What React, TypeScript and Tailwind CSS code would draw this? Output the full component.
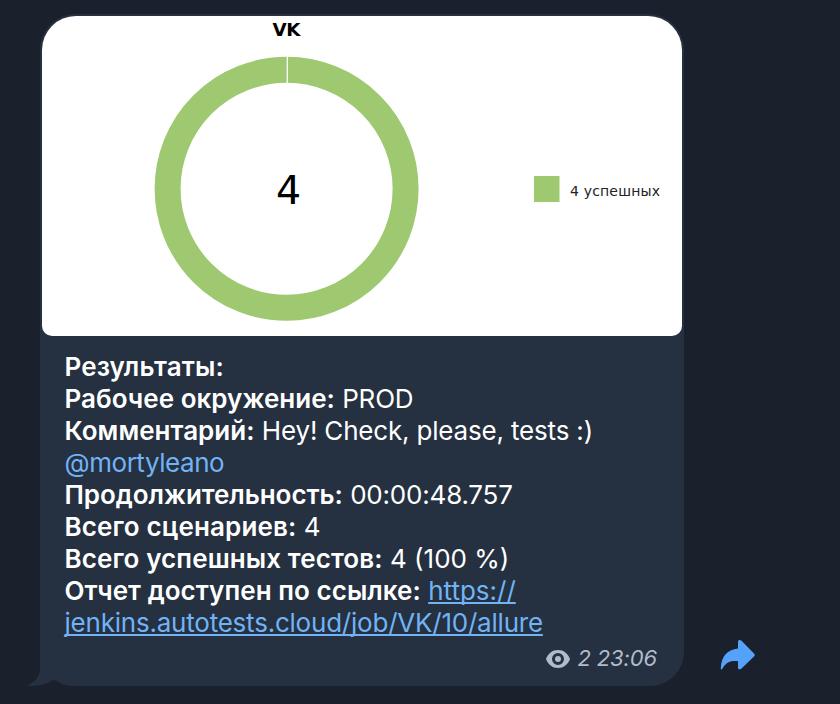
type Row = { label: string; value?: string; labelCls: string; valueCls?: string };

const rows: Row[] = [
  { label: "Результаты:", labelCls: "tracking-[0.1px]" },
  { label: "Рабочее окружение:", value: "PROD", labelCls: "tracking-[0.02px]", valueCls: "tracking-[-0.2px]" },
  { label: "Комментарий:", value: "Hey! Check, please, tests :)", labelCls: "tracking-[0.02px]", valueCls: "tracking-[-0.18px]" },
];

const stats: Row[] = [
  { label: "Продолжительность:", value: "00:00:48.757", labelCls: "tracking-[-0.05px]", valueCls: "tracking-[-0.2px]" },
  { label: "Всего сценариев:", value: "4", labelCls: "tracking-[0.14px]" },
  { label: "Всего успешных тестов:", value: "4 (100 %)", labelCls: "tracking-[0.1px]" },
];

const linkCls =
  "text-[#71b3f5] underline decoration-2 underline-offset-2 [text-decoration-skip-ink:none]";

function Line({ row }: { row: Row }) {
  return (
    <p className="h-8 whitespace-nowrap">
      <b className={`font-semibold ${row.labelCls}`}>{row.label}</b>{" "}
      <span className={row.valueCls}>{row.value}</span>
    </p>
  );
}

function Chart() {
  return (
    <svg
      className="block h-80 w-[640px] rounded-t-[34px] rounded-b-[10px] bg-white"
      viewBox="42 16 640 320"
      fontFamily="'DejaVu Sans', sans-serif"
    >
      <text x="286.5" y="35.5" fontSize="18.3" fontWeight="700" textAnchor="middle" textLength="28">
        VK
      </text>
      <circle cx="286.6" cy="188.8" r="119" fill="none" stroke="#9fc971" strokeWidth="26" />
      <path d="M287.300 56v27" stroke="#fff" strokeWidth="1.3" />
      <text x="288.5" y="203.500" fontSize="39.5" textAnchor="middle">
        4
      </text>
      <rect x="534" y="176" width="25.5" height="26" fill="#9fc971" />
      <text x="570" y="195.500" fontSize="14" fill="#222" textLength="90">
        4 успешных
      </text>
    </svg>
  );
}

export default function App() {
  return (
    <main className="flex h-[704px] w-[840px] items-end overflow-hidden bg-[#1b212c] pb-[18px] pl-10 font-['Inter',sans-serif]">
      <article className="relative h-[672px] w-[644px] rounded-t-[36px] rounded-br-[34px] rounded-bl-[34px] bg-[#253040] p-0.5">
        <svg className="absolute bottom-0 -left-3 h-12 w-[60px]" viewBox="0 0 60 48" fill="#253040">
          <path d="M12 0v30c0 8-4 13-12 17.3v.7c12 0 20-2 26-7 6 5 13 7 20 7h14V0Z" />
        </svg>
        <div className="relative">
          <Chart />
          <div className="pt-[15px] pr-[21px] pl-[22.5px] text-[26px] leading-8 text-white">
            {rows.map((r) => (
              <Line key={r.label} row={r} />
            ))}
            <p className="h-8 tracking-[-0.45px] text-[#71b3f5]">@mortyleano</p>
            {stats.map((r) => (
              <Line key={r.label} row={r} />
            ))}
            <p className="h-8 whitespace-nowrap">
              <b className="font-semibold tracking-[0.05px]">Отчет доступен по ссылке:</b>{" "}
              <a className={linkCls}>https://</a>
            </p>
            <p className="h-8 whitespace-nowrap">
              <a className={`tracking-[-0.22px] ${linkCls}`}>jenkins.autotests.cloud/job/VK/10/allure</a>
            </p>
          </div>
          <footer className="flex h-9 items-center justify-end gap-[7px] pt-[3px] pr-[25px] text-[22px] tracking-[-0.12px] text-[#b0bccd]">
            <svg className="h-[18px] w-6" viewBox="0 0 24 18">
              <path
                fillRule="evenodd"
                fill="currentColor"
                d="M12 0C6.5 0 2 3.4 0 9c2 5.600 6.500 9 12 9s10-3.400 12-9c-2-5.600-6.500-9-12-9Zm0 3a6 6 0 1 1 0 12 6 6 0 0 1 0-12Zm0 3a3 3 0 1 0 0 6 3 3 0 0 0 0-6Z"
              />
            </svg>
            <i>2 23:06</i>
          </footer>
        </div>
      </article>
      <svg className="mb-[14px] ml-9 h-8 w-9" viewBox="720 640 36 32">
        <path
          fill="#54a2fa"
          d="M738 642c0-2 2-2.500 3.500-1.200L754 653.500q1.500 1.500 0 3L741.500 668.500c-1.500 1.500-3.500 1-3.500-1v-6.300c-7-.5-12 1-15.500 7.300-.7 1.500-1.800 1-1.700-.5.500-11 6-18.300 17.200-19.500Z"
        />
      </svg>
    </main>
  );
}
